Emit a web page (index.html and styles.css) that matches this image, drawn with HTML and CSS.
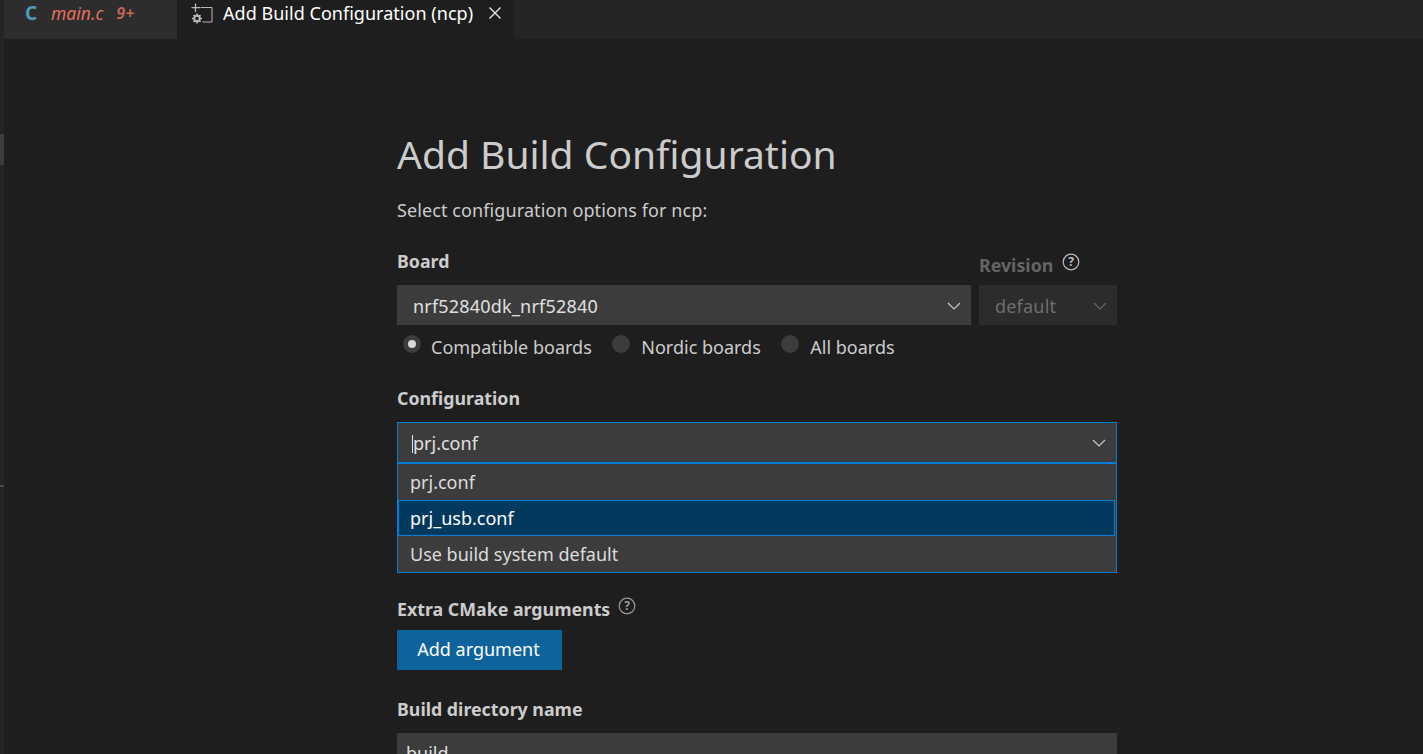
FILE: index.html
```html
<!DOCTYPE html>
<html lang="en">
<head>
  <meta charset="UTF-8" />
  <title>Add Build Configuration (ncp)</title>
  <link rel="stylesheet" href="styles.css">
</head>
<body>
  <div class="rail">
    <div class="rail-thumb"></div>
    <div class="rail-mark"></div>
  </div>
  <div class="main">
    <div class="tabs">
      <div class="tab">
        <span class="lang">C</span>
        <span class="file">main.c</span>
        <span class="count">9+</span>
      </div>
      <div class="tab active">
        <svg class="tab-icon" width="22" height="22" viewBox="0 0 22 22" fill="none" stroke="#b8b8b8" stroke-width="1">
          <path d="M4.500 0.500v8.500M0.500 4.700h8.500" stroke-width="1.300"/>
          <path d="M9.500 4.500h11.500v14.500H11.500"/>
          <circle cx="6" cy="15.500" r="2.800" stroke-width="2"/>
          <path d="M6 10.500v2M6 18.500v2M1 15.500h2M9 15.500h2M2.500 12l1.400 1.400M8.100 17.600l1.400 1.400M9.500 12l-1.400 1.400M3.900 17.600L2.500 19" stroke-width="1.600"/>
        </svg>
        <span class="tab-title">Add Build Configuration (ncp)</span>
        <svg class="tab-close" width="14" height="14" viewBox="0 0 14 14" stroke="#e6e6e6" stroke-width="1.400">
          <path d="M1.500 1.500l11 11M12.500 1.500l-11 11"/>
        </svg>
      </div>
    </div>

    <div class="content">
      <div class="form">
        <h1>Add Build Configuration</h1>
        <p class="intro">Select configuration options for ncp:</p>

        <div class="board-row">
          <div class="board-col">
            <div class="label">Board</div>
            <div class="select">
              <span>nrf52840dk_nrf52840</span>
              <svg class="chev" width="16" height="16" viewBox="0 0 16 16"><path d="M2 5l6 6 6-6"/></svg>
            </div>
          </div>
          <div class="rev-col">
            <div class="label dim">Revision
              <svg class="help" width="18" height="18" viewBox="0 0 18 18">
                <circle cx="9" cy="9" r="7.800"/>
                <text x="9" y="13" text-anchor="middle">?</text>
              </svg>
            </div>
            <div class="select disabled">
              <span>default</span>
              <svg class="chev" width="16" height="16" viewBox="0 0 16 16"><path d="M2 5l6 6 6-6"/></svg>
            </div>
          </div>
        </div>

        <div class="radios">
          <label class="radio checked"><i></i>Compatible boards</label>
          <label class="radio"><i></i>Nordic boards</label>
          <label class="radio"><i></i>All boards</label>
        </div>

        <div class="label config-label">Configuration</div>
        <div class="combo">
          <div class="select focused">
            <span><b class="caret"></b>prj.conf</span>
            <svg class="chev" width="16" height="16" viewBox="0 0 16 16"><path d="M2 5l6 6 6-6"/></svg>
          </div>
          <ul class="options">
            <li>prj.conf</li>
            <li class="current">prj_usb.conf</li>
            <li>Use build system default</li>
          </ul>
        </div>

        <div class="label">Extra CMake arguments
          <svg class="help grey" width="18" height="18" viewBox="0 0 18 18">
            <circle cx="9" cy="9" r="7.800"/>
            <text x="9" y="13" text-anchor="middle">?</text>
          </svg>
        </div>
        <button class="btn">Add argument</button>

        <div class="label build-label">Build directory name</div>
        <div class="select input"><span>build</span></div>
      </div>
    </div>
  </div>
</body>
</html>
```

FILE: styles.css
```css
html, body {
  height: 100%;
}
body {
  margin: 0;
  display: flex;
  height: 754px;
  overflow: hidden;
  background: #1e1e1e;
  color: #cccccc;
  font-family: "Noto Sans", "Open Sans", sans-serif;
  font-size: 18px;
}
.rail {
  width: 4px;
  background: #252526;
  position: relative;
  flex: none;
}
.rail-thumb {
  position: absolute;
  top: 134px;
  left: 0;
  width: 4px;
  height: 31px;
  background: #3c3c42;
}
.rail-mark {
  position: absolute;
  top: 485px;
  left: 0;
  width: 4px;
  height: 2px;
  background: #4a4a4a;
}
.main {
  flex: 1;
  display: flex;
  flex-direction: column;
  min-width: 0;
}

/* tabs */
.tabs {
  display: flex;
  height: 39px;
  background: #252526;
  flex: none;
}
.tab {
  display: flex;
  align-items: center;
  height: 39px;
  background: #2d2d2d;
  width: 173px;
  padding: 0 0 14px 21px;
  box-sizing: border-box;
}
.tab.active {
  background: #1e1e1e;
  width: 337px;
  padding-left: 14px;
}
.lang {
  color: #519aba;
  font-weight: 700;
  font-size: 19px;
  width: 26px;
}
.file {
  color: #e5705f;
  font-style: italic;
  font-size: 17.500px;
}
.count {
  color: #c9665a;
  font-style: italic;
  font-weight: 600;
  font-size: 16px;
  margin-left: 13px;
}
.tab-icon {
  margin: 3px 10px 0 0;
}
.tab-title {
  color: #ffffff;
  font-size: 18px;
  letter-spacing: 0.03px;
  white-space: nowrap;
}
.tab-close {
  margin: 1px 0 0 15px;
}

/* form */
.content {
  flex: 1;
  padding-left: 393px;
}
.form {
  width: 720px;
}
h1 {
  margin: 0;
  padding-top: 87px;
  font-size: 39px;
  font-weight: 400;
  line-height: 56px;
  color: #cccccc;
}
.intro {
  margin: 16px 0 0;
  font-size: 18px;
  letter-spacing: 0.1px;
  line-height: 24px;
}
.label {
  font-weight: 700;
  font-size: 17.800px;
  line-height: 24px;
  padding-bottom: 1px;
  display: flex;
  align-items: flex-start;
  color: #cccccc;
}
.label.dim {
  color: #656565;
}
.board-row {
  display: flex;
  gap: 8px;
  margin-top: 27px;
}
.board-col {
  flex: 1;
}
.board-col .select span {
  letter-spacing: 0.2px;
}
.rev-col {
  width: 138px;
}
.rev-col .label {
  margin-top: 4px;
  margin-bottom: -4px;
}
.select {
  display: flex;
  align-items: center;
  justify-content: space-between;
  box-sizing: border-box;
  height: 40px;
  margin-top: 12px;
  padding: 0 9px 0 16px;
  background: #3c3c3c;
  color: #e0e0e0;
  font-size: 18px;
}
.board-col .select {
  margin-top: 11px;
  padding-top: 1px;
}
.select.disabled {
  background: #2c2c2c;
  color: #6e6e6e;
  margin-top: 11px;
  padding-top: 1px;
  letter-spacing: 0.2px;
}
.chev path {
  fill: none;
  stroke: #c8c8c8;
  stroke-width: 1.200;
}
.disabled .chev path {
  stroke: #666;
}
.help {
  margin: 0 0 0 9px;
}
.help circle {
  fill: none;
  stroke: #bdbdbd;
  stroke-width: 1.200;
}
.help text {
  fill: #bdbdbd;
  font-size: 12px;
  font-weight: 700;
}
.help.grey {
  margin-left: 8px;
}
.help.grey circle {
  stroke: #999999;
}
.help.grey text {
  fill: #999999;
}
.radios {
  display: flex;
  gap: 20.500px;
  height: 24px;
  margin-top: 10px;
  padding-left: 6px;
  font-size: 18px;
}
.radio {
  display: flex;
  align-items: center;
}
.radio i {
  box-sizing: border-box;
  width: 18px;
  height: 18px;
  margin: -6px 11px 0 0;
  border-radius: 50%;
  background: #3c3c3c;
}
.radio.checked i {
  border: 5px solid #3c3c3c;
  background: #d8d8d8;
  margin-right: 10px;
}
.config-label {
  margin-top: 27px;
}
.combo {
  position: relative;
  margin-bottom: 134px;
}
.select.focused {
  height: 41px;
  margin-top: 11px;
  border: 1px solid #007fd4;
  padding-left: 14px;
}
.caret {
  display: inline-block;
  width: 1px;
  height: 18px;
  background: #d8e8ff;
  vertical-align: -3px;
}
.options {
  position: absolute;
  top: 41px;
  left: 0;
  right: 0;
  margin: 0;
  padding: 0;
  list-style: none;
  background: #3c3c3c;
  border: 1px solid #007fd4;
  color: #dcdcdc;
  font-size: 18px;
}
.options li {
  box-sizing: border-box;
  height: 36px;
  line-height: 36px;
  padding-left: 12px;
}
.options li.current {
  background: #04395e;
  border: 1px solid #007fd4;
  line-height: 34px;
  margin-right: 1px;
  padding-left: 11px;
  color: #ffffff;
}
.btn {
  display: block;
  width: 165px;
  height: 40px;
  margin-top: 8px;
  border: none;
  background: #0e639c;
  color: #ffffff;
  font-family: inherit;
  font-size: 18px;
  padding: 0 2px 2px 0;
}
.build-label {
  margin-top: 27px;
}
.select.input {
  margin-top: 11px;
  padding-left: 9px;
}
```
